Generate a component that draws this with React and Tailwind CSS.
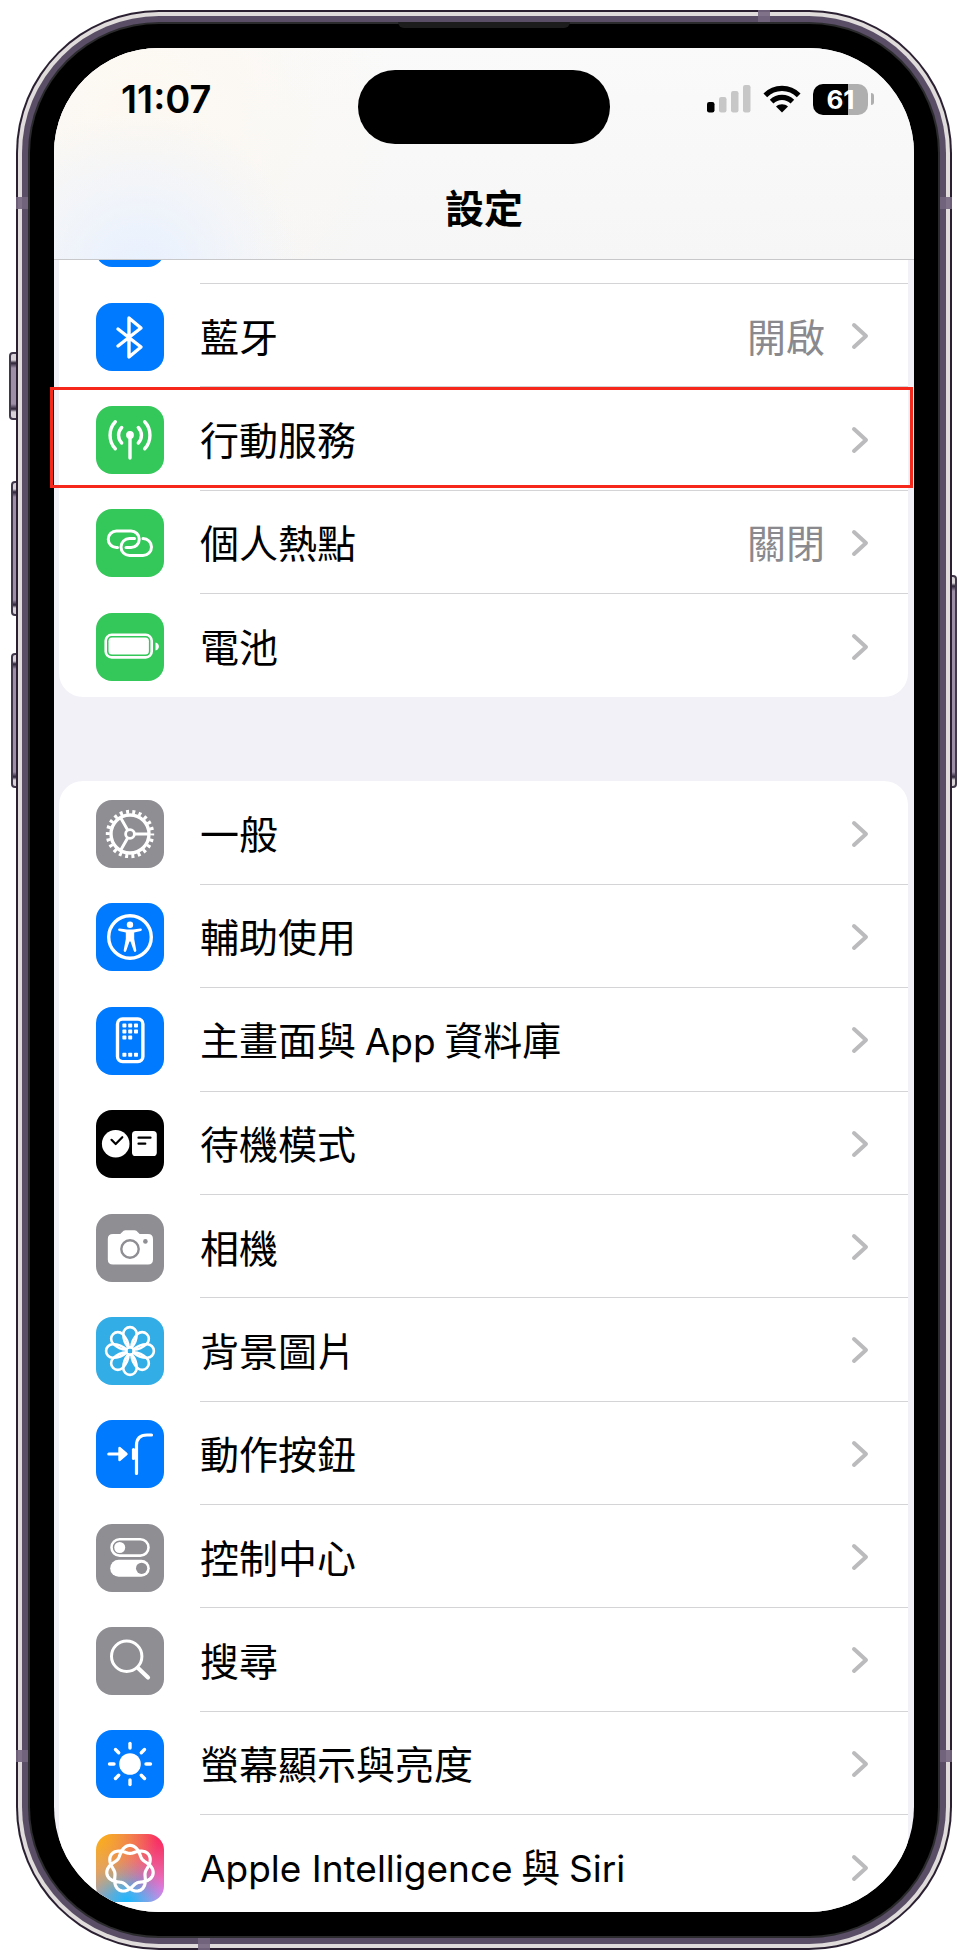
import React from 'react';
import clsx from 'clsx';

const PETALS = [0, 45, 90, 135, 180, 225, 270, 315];

// closed interlaced curve with seven lobes
function knotPath() {
  const points = [];
  for (let i = 0; i < 280; i++) {
    const t = (i / 280) * Math.PI * 4;
    const r = 19.6 + 4 * Math.cos(3.5 * t);
    points.push(`${(34 + r * Math.sin(t)).toFixed(2)} ${(35 - r * Math.cos(t)).toFixed(2)}`);
  }
  return `M${points.join('L')}Z`;
}

const line = {
  fill: 'none',
  stroke: '#fff',
  strokeWidth: 3.4,
  strokeLinecap: 'round',
  strokeLinejoin: 'round',
};

const ICONS = {
  bluetooth: <path {...line} d="M22 26 45 44 33 54V15L45 25 22 43" />,
  cellular: (
    <g {...line}>
      <path d="M34 29V52M25.7 21.5C21.5 26 21.5 32.5 25.7 37M42.3 21.5C46.5 26 46.5 32.5 42.3 37M19.3 15.7C12.3 23 12.3 35.5 19.3 42.8M48.7 15.7C55.7 23 55.7 35.5 48.7 42.8" />
      <circle cx="34" cy="29" r="2.2" />
    </g>
  ),
  hotspot: (
    <g {...line} strokeWidth="3">
      <path d="M21.5 38.5H20.5A8.2 8.2 0 0 1 20.5 22H35A8.2 8.2 0 0 1 35 38.5H30" />
      <path d="M47 29.5A8.5 8.5 0 0 1 47 46.5H33.5A8.5 8.5 0 0 1 33.5 29.5H38.5" />
    </g>
  ),
  battery: (
    <g>
      <rect x="9.7" y="21.8" width="46" height="22.6" rx="6" {...line} strokeWidth="2.6" />
      <rect x="12.5" y="24.6" width="40.4" height="17" rx="3.6" fill="#fff" />
      <path d="M59.5 29.5C64 30.5 64 36.5 59.5 37.5Z" fill="#fff" />
    </g>
  ),
  general: (
    <g {...line} strokeLinecap="butt">
      <circle cx="34" cy="34" r="19" />
      <circle cx="34" cy="34" r="22.2" strokeWidth="4" strokeDasharray="3 3.341" strokeDashoffset="1.5" />
      <circle cx="34" cy="34" r="4.4" strokeWidth="2.8" />
      <path d="M39 34H52M31.5 29.7 24.5 17.6M31.5 38.3 24.5 50.4" strokeWidth="3" />
    </g>
  ),
  accessibility: (
    <g>
      <circle cx="34" cy="34" r="21.3" {...line} />
      <circle cx="34" cy="21.8" r="3.2" fill="#fff" />
      <path
        d="M23.6 25.5 31 26.6H37L44.4 25.5C46.2 25.3 46.4 27.6 44.8 28L38.2 29.4V36L40.3 47.3C40.5 49 38.4 49.5 37.8 48L34.5 38.5H33.5L30.2 48C29.6 49.5 27.5 49 27.7 47.3L29.8 36V29.4L23.2 28C21.6 27.6 21.8 25.3 23.6 25.5Z"
        fill="#fff"
      />
    </g>
  ),
  home: (
    <g fill="#fff">
      <rect x="21.5" y="12" width="25.4" height="42.6" rx="5" {...line} />
      {[[26.4, 16.6], [32.2, 16.6], [38, 16.6], [26.4, 22.6], [32.2, 22.6], [38, 22.6], [26.4, 28.6], [32.2, 28.6], [26.4, 45.8], [32.2, 45.8], [38, 45.8]].map(([x, y]) => (
        <rect key={`${x}-${y}`} x={x} y={y} width="4" height="4" rx="0.8" />
      ))}
    </g>
  ),
  standby: (
    <g fill="#fff">
      <circle cx="19.7" cy="33.7" r="13.8" />
      <rect x="36" y="21" width="24.8" height="25" rx="3.6" />
      <g {...line} stroke="#000" strokeWidth="2.2">
        <path d="M15.5 29.8 19.7 34 26.3 27.2M42.5 27.7H54.5M42.5 33.7H49.3" />
      </g>
    </g>
  ),
  camera: (
    <g fill="#fff">
      <path d="M17 20H23.5C25.5 20 26.5 16.2 29.5 16.2H38.5C41.5 16.2 42.5 20 44.5 20H52Q57 20 57 25V45.5Q57 50.5 52 50.5H17Q11.8 50.5 11.8 45.5V25Q11.8 20 17 20Z" />
      <circle cx="34" cy="35" r="8.7" stroke="#8e8e93" strokeWidth="2.4" />
      <circle cx="49.4" cy="27.4" r="2.3" fill="#8e8e93" />
    </g>
  ),
  wallpaper: (
    <g {...line} strokeWidth="2.6">
      {PETALS.map((angle) => (
        <path
          key={angle}
          transform={`translate(34 34) rotate(${angle})`}
          d="M-1.5-3.5C-5.8-8-6.7-12.5-6.7-17.2A6.7 6.7 0 0 1 6.7-17.2C6.7-12.5 5.8-8 1.5-3.5"
        />
      ))}
      <circle cx="34" cy="34" r="3.8" />
    </g>
  ),
  action: (
    <g {...line} strokeWidth="3.2">
      <path d="M12.8 34H24" />
      <path d="M23.5 28V40L30.5 34Z" fill="#fff" strokeWidth="2.4" />
      <path d="M40.5 53.5V25.5Q40.5 15 51 15H55.5" />
      <path d="M37.5 29.5V38.5" />
    </g>
  ),
  control: (
    <g fill="#fff">
      <rect x="15.5" y="15.3" width="37" height="16.3" rx="8.15" {...line} strokeWidth="2.6" />
      <circle cx="23.7" cy="23.5" r="5.5" />
      <rect x="14.2" y="35.8" width="39.6" height="17" rx="8.5" />
      <circle cx="45.6" cy="44.3" r="5.6" fill="#8e8e93" />
    </g>
  ),
  search: (
    <g {...line}>
      <circle cx="30.7" cy="29.2" r="15.2" strokeWidth="3" />
      <path d="M42 41 52 50.5" strokeWidth="4.2" />
    </g>
  ),
  display: (
    <g>
      <circle cx="34" cy="34" r="10.8" fill="#fff" />
      {PETALS.map((angle) => (
        <path key={angle} {...line} transform={`rotate(${angle} 34 34)`} d="M34 13.5V18" />
      ))}
    </g>
  ),
  siri: <path {...line} strokeWidth="3.2" d={knotPath()} />,
};

const BLUE = 'bg-[#007aff]';
const GREEN = 'bg-[#34c759]';
const GRAY = 'bg-[#8e8e93]';

const connectivity = [
  { icon: 'bluetooth', label: '藍牙', value: '開啟', color: BLUE },
  { icon: 'cellular', label: '行動服務', color: GREEN, highlighted: true },
  { icon: 'hotspot', label: '個人熱點', value: '關閉', color: GREEN },
  { icon: 'battery', label: '電池', color: GREEN },
];

const system = [
  { icon: 'general', label: '一般', color: GRAY },
  { icon: 'accessibility', label: '輔助使用', color: BLUE },
  { icon: 'home', label: <>主畫面與 <Latin>App</Latin> 資料庫</>, color: BLUE },
  { icon: 'standby', label: '待機模式', color: 'bg-black' },
  { icon: 'camera', label: '相機', color: GRAY },
  { icon: 'wallpaper', label: '背景圖片', color: 'bg-[#32ade6]' },
  { icon: 'action', label: '動作按鈕', color: BLUE },
  { icon: 'control', label: '控制中心', color: GRAY },
  { icon: 'search', label: '搜尋', color: GRAY },
  { icon: 'display', label: '螢幕顯示與亮度', color: BLUE },
];

const siri = {
  icon: 'siri',
  label: <><Latin>Apple Intelligence</Latin> 與 <Latin>Siri</Latin></>,
  color:
    'bg-[radial-gradient(circle_at_0%_0%,#ffae10,transparent_65%),radial-gradient(circle_at_100%_0%,#ff1f5c,transparent_70%),radial-gradient(circle_at_45%_100%,#18b8ff,transparent_55%),radial-gradient(circle_at_100%_80%,#e68cff,transparent_60%)] bg-[#d09a98]',
};

function Latin({ children }) {
  return <span className="font-[Inter,sans-serif] text-[37px]">{children}</span>;
}

function Tile({ icon, color }) {
  return (
    <span className={clsx('block size-[68px] shrink-0 overflow-hidden rounded-2xl', color)}>
      <svg viewBox="0 0 68 68" className="size-full" aria-hidden="true">
        {ICONS[icon]}
      </svg>
    </span>
  );
}

function Row({ item, last, className = 'min-h-20 flex-1' }) {
  return (
    <li className={clsx('relative flex', className)}>
      <a href="#" className="flex flex-1 items-center gap-9 pt-0.5 pl-[37px]">
        <Tile icon={item.icon} color={item.color} />
        <span className={clsx('flex flex-1 items-center self-stretch pr-[39px]', !last && 'border-b border-[#d4d4d6]')}>
          <span className="flex-1 pb-0.5 whitespace-nowrap">{item.label}</span>
          {item.value && <span className="mr-[26px] pb-0.5 text-[#8a8a8e]">{item.value}</span>}
          <svg viewBox="0 0 18 28" className="h-7 w-[18px]" aria-hidden="true">
            <path d="M3 3 15 14 3 25" fill="none" stroke="#bbbbbd" strokeWidth="4" strokeLinecap="round" strokeLinejoin="round" />
          </svg>
        </span>
      </a>
      {item.highlighted && (
        <span className="pointer-events-none absolute -left-[9px] -right-[5px] top-0 bottom-[3px] border-[3px] border-[#f5281b]" />
      )}
    </li>
  );
}

function StatusBar() {
  return (
    <div className="grid grid-cols-[1fr_252px_1fr] items-start pt-[22px] font-[Inter,sans-serif]">
      <div className="flex h-[58px] items-center pl-[67px] text-[38px] font-semibold">11:07</div>
      <div className="h-[74px] rounded-full bg-black" />
      <div className="flex h-[58px] items-center justify-end gap-3 pr-10">
        <svg viewBox="0 0 44 28" className="h-7 w-11" aria-hidden="true">
          <rect x="0" y="17" width="7.5" height="10.5" rx="2.2" />
          <g fill="#c7c7c7">
            <rect x="12" y="12" width="7.5" height="15.5" rx="2.2" />
            <rect x="24" y="6" width="7.5" height="21.5" rx="2.2" />
            <rect x="36" y="0" width="7.5" height="27.5" rx="2.2" />
          </g>
        </svg>
        <svg viewBox="0 0 38 28" className="h-7 w-[38px]" aria-hidden="true">
          <g fill="none" stroke="#000" strokeWidth="5.2">
            <path d="M2.3 10.3C11.5 1 26.5 1 35.7 10.3" />
            <path d="M8.6 16.7C14.5 11 23.5 11 29.4 16.7" />
          </g>
          <path d="M19 27.5 13 21.4C16.3 18.5 21.7 18.5 25 21.4Z" />
        </svg>
        <div className="flex items-center gap-[3px]">
          <div className="flex h-[31px] w-[55px] items-center justify-center rounded-[10px] bg-[linear-gradient(90deg,#000_63%,#afafaf_63%)] text-[26px] font-bold text-white">
            61
          </div>
          <div className="h-3 w-[3px] rounded-r-full bg-[#afafaf]" />
        </div>
      </div>
    </div>
  );
}

function SideButton({ className }) {
  return (
    <span
      className={clsx(
        'absolute border-2 border-[#40384a] bg-[linear-gradient(#d9d3d8_0,#d9d3d8_6px,#2c2236_9px,#9c8fa6_14px,#9c8fa6_calc(100%-14px),#2c2236_calc(100%-9px),#d9d3d8_calc(100%-6px))]',
        className
      )}
    />
  );
}

function AntennaBand({ className }) {
  return <span className={clsx('absolute bg-[#74667f]/90', className)} />;
}

export default function App() {
  return (
    <div className="flex min-h-screen flex-col bg-white pt-[10px] pr-[15px] pb-2 pl-4 font-['Noto_Sans_CJK_TC',sans-serif] text-black">
      <div className="relative flex flex-1 flex-col">
        <SideButton className="-left-[7px] top-[342px] h-[68px] w-3 rounded-l-sm" />
        <SideButton className="-left-[5px] top-[471px] h-[135px] w-3 rounded-l-sm" />
        <SideButton className="-left-[5px] top-[643px] h-[135px] w-3 rounded-l-sm" />
        <SideButton className="-right-[5px] top-[565px] h-[213px] w-3 rounded-r-sm" />

        {/* metal frame: dark edge, bright rim, purple band, dark seam */}
        <div className="relative flex flex-1 flex-col rounded-[143px] bg-[#2a2032] p-[2px]">
          <div className="flex flex-1 flex-col rounded-[141px] bg-[#e0dcdb] p-1">
            <div className="flex flex-1 flex-col rounded-[137px] bg-[#594e66] p-[6px]">
              <div className="flex flex-1 flex-col rounded-[131px] bg-[#2b2b2d] p-[2px]">
                <div className="flex flex-1 flex-col rounded-[129px] bg-black p-6">
                  <div className="flex flex-1 flex-col rounded-[105px] bg-[#f2f1f7]">
                    <header className="rounded-t-[105px] border-b border-[#c8c8ca] bg-[radial-gradient(circle_at_10%_105%,#e8f1ff,transparent_20%),radial-gradient(circle_at_10%_30%,#fdf8f1,transparent_32%),linear-gradient(#fafafa,#f6f6f6)]">
                      <StatusBar />
                      <h1 className="flex h-[115px] items-center justify-center pt-2.5 text-[39px] font-semibold">設定</h1>
                    </header>

                    <main className="flex flex-1 flex-col text-[39px] leading-none">
                      <ul className="mr-[6px] ml-[5px] flex grow-4 basis-6 flex-col rounded-b-3xl bg-white">
                        <li className="flex h-6 shrink-0 items-end overflow-hidden pl-[37px]">
                          <span className="flex flex-1 items-end gap-9">
                            <span className="mb-[17px] h-[68px] w-[68px] shrink-0 rounded-2xl bg-[#007aff]" />
                            <span className="flex-1 border-b border-[#d4d4d6]" />
                          </span>
                        </li>
                        {connectivity.map((item, i) => (
                          <Row key={item.icon} item={item} last={i === connectivity.length - 1} />
                        ))}
                      </ul>

                      <div className="mt-[84px] flex grow-10 basis-[97px] flex-col overflow-hidden rounded-b-[105px] pr-[6px] pl-[5px]">
                        <ul className="flex flex-1 flex-col rounded-t-3xl bg-white">
                          {system.map((item) => (
                            <Row key={item.icon} item={item} />
                          ))}
                          <Row item={siri} last className="h-[97px] shrink-0 *:-mb-1.5" />
                        </ul>
                      </div>
                    </main>
                  </div>
                </div>
              </div>
            </div>
          </div>
          <span className="absolute top-3 left-1/2 h-[6px] w-[172px] -translate-x-1/2 rounded-b-md bg-[#1c1c1d]" />
          <AntennaBand className="top-0 right-[182px] h-3 w-3" />
          <AntennaBand className="bottom-0 left-[182px] h-3 w-3" />
          <AntennaBand className="top-[187px] left-0 h-3 w-3" />
          <AntennaBand className="top-[187px] right-0 h-3 w-3" />
          <AntennaBand className="bottom-[188px] left-0 h-3 w-3" />
          <AntennaBand className="right-0 bottom-[188px] h-3 w-3" />
        </div>
      </div>
    </div>
  );
}
